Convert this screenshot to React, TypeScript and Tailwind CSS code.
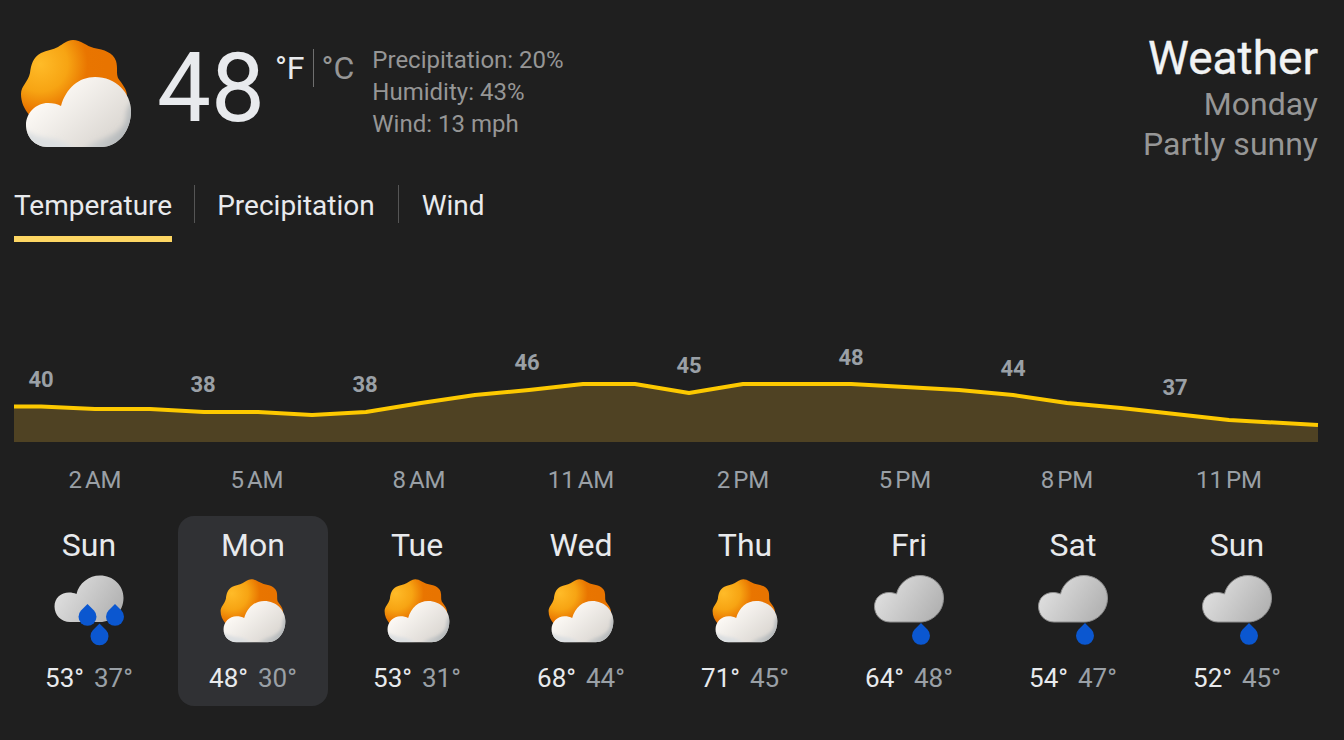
import React from "react";

const LINE: [number, number][] = [
  [14, 406.5], [41, 406.5], [95, 409], [150, 409], [204, 412], [258, 412], [312, 415], [366, 412],
  [421, 403], [475, 395], [529, 390], [583, 384], [635, 384], [689, 393], [743, 384], [797, 384],
  [851, 384], [905, 387], [959, 390], [1013, 395], [1067, 403], [1121, 408], [1175, 414], [1229, 420], [1318, 425],
];

const LABELS = [
  { t: "40", x: 41, y: 380 },
  { t: "38", x: 203, y: 385 },
  { t: "38", x: 365, y: 385 },
  { t: "46", x: 527, y: 363 },
  { t: "45", x: 689, y: 366 },
  { t: "48", x: 851, y: 358 },
  { t: "44", x: 1013, y: 369 },
  { t: "37", x: 1175, y: 388 },
];

const TIMES = ["2 AM", "5 AM", "8 AM", "11 AM", "2 PM", "5 PM", "8 PM", "11 PM"];

type IconKind = "sun" | "rain1" | "rain3";

const DAYS: { name: string; hi: number; lo: number; icon: IconKind; active?: boolean }[] = [
  { name: "Sun", hi: 53, lo: 37, icon: "rain3" },
  { name: "Mon", hi: 48, lo: 30, icon: "sun", active: true },
  { name: "Tue", hi: 53, lo: 31, icon: "sun" },
  { name: "Wed", hi: 68, lo: 44, icon: "sun" },
  { name: "Thu", hi: 71, lo: 45, icon: "sun" },
  { name: "Fri", hi: 64, lo: 48, icon: "rain1" },
  { name: "Sat", hi: 54, lo: 47, icon: "rain1" },
  { name: "Sun", hi: 52, lo: 45, icon: "rain1" },
];

const CLOUD_PATH =
  "M28 107C14 107 6 96 6 85C6 73 16 63 28 63C33 63 38 64 41 66C46 48 59 37 75 37C96 37 111 53 111 71C111 90 99 107 81 107Z";

const Gradients = () => (
  <svg className="absolute w-0 h-0" aria-hidden="true">
    <defs>
      <radialGradient id="sunFill" gradientUnits="userSpaceOnUse" cx="20" cy="24" r="66">
        <stop offset="0" stopColor="#ffbb28" />
        <stop offset="0.42" stopColor="#f7a413" />
        <stop offset="0.72" stopColor="#e97500" />
        <stop offset="1" stopColor="#e87400" />
      </radialGradient>
      <linearGradient id="cloudFill" gradientUnits="userSpaceOnUse" x1="40" y1="45" x2="92" y2="105">
        <stop offset="0" stopColor="#fcf9f5" />
        <stop offset="1" stopColor="#d9d5d0" />
      </linearGradient>
      <linearGradient id="cloudShade" gradientUnits="userSpaceOnUse" x1="70" y1="84" x2="108" y2="104">
        <stop offset="0" stopColor="#d8d8d6" />
        <stop offset="1" stopColor="#aeb3b6" />
      </linearGradient>
      <linearGradient id="greyFill" gradientUnits="userSpaceOnUse" x1="8" y1="12" x2="62" y2="46">
        <stop offset="0" stopColor="#dedede" />
        <stop offset="1" stopColor="#b0b0b0" />
      </linearGradient>
      <clipPath id="cloudClip">
        <path d={CLOUD_PATH} />
      </clipPath>
      <filter id="soft" x="-20%" y="-20%" width="140%" height="140%">
        <feGaussianBlur stdDeviation="2.5" />
      </filter>
    </defs>
  </svg>
);

const SunCloud = ({ className }: { className: string }) => (
  <svg viewBox="0 0 112 108" className={className}>
    <path
      d="M53 0C61 0 66 6 74 8C84 10 93 12 96 21C98 28 96 33 98 38C102 44 107 49 107 56L107 80L10 76C4 69 1 62 1 54C1 46 8 42 10 33C11 25 13 17 21 13C27 10 33 10 38 7C43 4 47 0 53 0Z"
      fill="url(#sunFill)"
    />
    <path d={CLOUD_PATH} fill="url(#cloudFill)" />
    <g clipPath="url(#cloudClip)">
      <g filter="url(#soft)">
        <path d="M0 88C10 94 20 98 32 99C40 100 48 104 60 112L0 114Z" fill="#dcdfe1" />
        <path d="M116 58C108 64 106 70 106 78C104 90 92 96 80 100C72 103 66 106 60 114L116 114Z" fill="url(#cloudShade)" />
      </g>
    </g>
  </svg>
);

const Drop = ({ x, y }: { x: number; y: number }) => (
  <path d={`M${x} ${y}L${x + 6.5} ${y + 6.5}A9 9 0 1 1 ${x - 6.5} ${y + 6.5}Z`} fill="#0b57d0" />
);

const RainCloud = ({ drops, className }: { drops: 1 | 3; className: string }) => (
  <svg viewBox="0 0 70 71" className={className}>
    <path
      d="M16 47C7 47 0.5 40 0.5 31.5C0.5 23 7 17.5 15 17.5C18 17.5 20 18 22.5 19C25 8 35 0.5 46 0.5C59 0.5 69.5 10 69.5 23C69.5 37 58 47 46 47Z"
      fill="url(#greyFill)"
      stroke={drops === 1 ? "#8f8f8f" : "none"}
      strokeWidth="1"
    />
    {drops === 1 ? (
      <Drop x={47} y={48} />
    ) : (
      <>
        <Drop x={33.5} y={29} />
        <Drop x={61} y={29} />
        <Drop x={45.5} y={48.5} />
      </>
    )}
  </svg>
);

const DayCard = ({ day }: { day: (typeof DAYS)[number] }) => (
  <div
    className={`w-[150px] h-[190px] rounded-2xl flex flex-col items-center pt-[11px] ${day.active ? "bg-[#303134]" : ""}`}
  >
    <div className="text-[32px] leading-[36px] text-[#e8eaed]">{day.name}</div>
    <div className="h-[72px] mt-[12px] flex items-start justify-center">
      {day.icon === "sun" ? (
        <SunCloud className="w-[66px] h-[64px] mt-[4px]" />
      ) : (
        <RainCloud drops={day.icon === "rain3" ? 3 : 1} className="w-[70px] h-[71px]" />
      )}
    </div>
    <div className="mt-[15px] flex gap-[10px] text-[26px] leading-[32px]">
      <span className="text-[#e8eaed]">{day.hi}°</span>
      <span className="text-[#9aa0a6]">{day.lo}°</span>
    </div>
  </div>
);

export default function App() {
  const linePts = LINE.map((p) => p.join(",")).join(" ");
  const areaPts = `14,442 ${linePts} 1318,442`;

  return (
    <div className="relative w-[1344px] h-[740px] overflow-hidden bg-[#1f1f1f] font-['Roboto',sans-serif]">
      <Gradients />

      <div className="flex justify-between pl-[14px] pr-[26px] pt-[32px] h-[160px]">
        <div className="flex items-start">
          <SunCloud className="w-[112px] h-[108px] ml-[6px] mt-[8px]" />
          <div className="ml-[25px] text-[96px] leading-[112px] text-[#e8eaed]">48</div>
          <div className="ml-[10px] mt-[16px] flex items-center text-[32px] leading-[40px]">
            <span className="text-[#e8eaed]">°F</span>
            <span className="mx-[8px] w-px h-[38px] bg-[#6f6f6f]" />
            <span className="text-[#969696]">°C</span>
          </div>
          <div className="ml-[18px] mt-[12px] text-[24px] leading-[32px] text-[#969696]">
            <div>Precipitation: 20%</div>
            <div>Humidity: 43%</div>
            <div>Wind: 13 mph</div>
          </div>
        </div>
        <div className="text-right text-[#969696] text-[32px] leading-[40px]">
          <div className="text-[46px] leading-[52px] text-[#f1f3f4] [-webkit-text-stroke:0.4px_#f1f3f4]">Weather</div>
          <div>Monday</div>
          <div>Partly sunny</div>
        </div>
      </div>

      <div className="flex items-start pl-[14px] mt-[19px] text-[28px] leading-[40px] text-[#e8eaed]">
        <div className="pt-[7px] h-[63px] border-b-[6px] border-[#fdd663]">Temperature</div>
        <div className="mx-[22px] w-px h-[38px] mt-[6px] bg-[#555555]" />
        <div className="pt-[7px]">Precipitation</div>
        <div className="mx-[23px] w-px h-[38px] mt-[6px] bg-[#555555]" />
        <div className="pt-[7px]">Wind</div>
      </div>

      {LABELS.map((l) => (
        <div
          key={l.x}
          className="absolute w-[60px] -translate-x-1/2 -translate-y-1/2 text-center text-[22px] leading-[26px] font-bold text-[#9aa0a6]"
          style={{ left: l.x, top: l.y }}
        >
          {l.t}
        </div>
      ))}

      <svg viewBox="0 242 1344 200" className="block w-[1344px] h-[200px]">
        <polygon points={areaPts} fill="#4f4223" />
        <polyline points={linePts} fill="none" stroke="#fdc900" strokeWidth="4" strokeLinejoin="round" />
      </svg>

      <div className="flex pl-[14px] mt-[22px] text-[24px] leading-[32px] text-[#9aa0a6]">
        {TIMES.map((t) => (
          <div key={t} className="w-[162px] text-center [word-spacing:-3px]">
            {t}
          </div>
        ))}
      </div>

      <div className="flex pl-[14px] gap-[14px] mt-[20px]">
        {DAYS.map((d, i) => (
          <DayCard key={i} day={d} />
        ))}
      </div>
    </div>
  );
}
